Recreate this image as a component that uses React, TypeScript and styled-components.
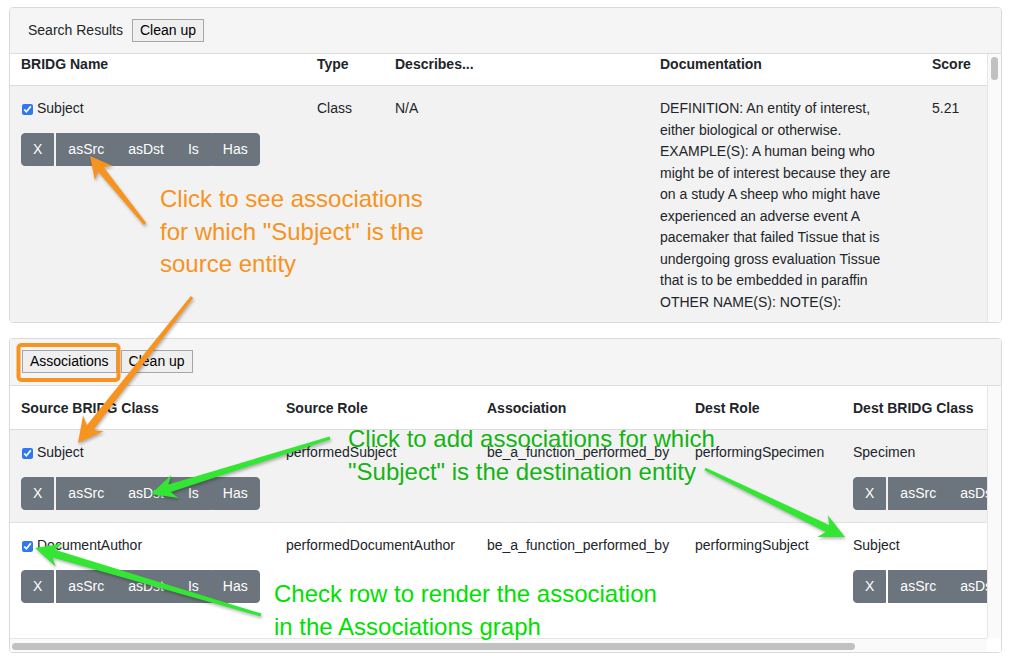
import React from 'react';
import styled, { createGlobalStyle } from 'styled-components';

const FONT = '"Liberation Sans", Arial, Helvetica, sans-serif';

const GlobalStyle = createGlobalStyle`
  html, body { margin: 0; padding: 0; background: #fff; }
  body { font-family: ${FONT}; font-size: 14px; line-height: 21px; color: #212529; }
  * { box-sizing: border-box; }
`;

const Page = styled.div`
  position: relative;
  width: 1009px;
  height: 656px;
  overflow: hidden;
  padding: 7px 7px 0 9px;
  display: flex;
  flex-direction: column;
  gap: 15px;
`;

const Panel = styled.section<{ $height: number }>`
  flex: none;
  height: ${(p) => p.$height}px;
  display: flex;
  flex-direction: column;
  border: 1px solid #dadada;
  border-radius: 4px;
  background: #fff;
  overflow: hidden;
`;

const PanelHeader = styled.div<{ $padBottom: number }>`
  flex: none;
  display: flex;
  align-items: center;
  gap: 4px;
  padding: 11px 12px ${(p) => p.$padBottom}px;
  background: #f5f5f5;
  border-bottom: 1px solid #dcdcdc;
`;

const HeaderTitle = styled.span`
  margin: 0 5px 0 6px;
  font-size: 14px;
  line-height: 21px;
  color: #212529;
`;

const PlainButton = styled.button`
  height: 23px;
  padding: 0 7px;
  font: 14px/21px ${FONT};
  color: #000;
  background: #efefef;
  border: 1px solid #a6a6a6;
  border-radius: 0;
  cursor: pointer;
`;

/* scroll area: viewport plus drawn scrollbars */
const ScrollFrame = styled.div<{ $horizontal?: boolean }>`
  flex: 1;
  min-height: 0;
  display: grid;
  grid-template-columns: minmax(0, 1fr) 14px;
  grid-template-rows: ${(p) => (p.$horizontal ? 'minmax(0, 1fr) 14px' : 'minmax(0, 1fr)')};
  background: #fff;
`;

const Viewport = styled.div`
  overflow: hidden;
  min-width: 0;
  min-height: 0;
`;

const VTrack = styled.div`
  background: #fafafa;
  border-left: 1px solid #e6e6e6;
  padding: 3px 3px 0 3px;
`;

const VThumb = styled.div`
  height: 23px;
  border-radius: 4px;
  background: #c1c1c1;
`;

const HTrack = styled.div`
  background: #fafafa;
  border-top: 1px solid #e6e6e6;
  padding: 4px 0 0 2px;
`;

const HThumb = styled.div<{ $w: number }>`
  width: ${(p) => p.$w}px;
  height: 7px;
  border-radius: 4px;
  background: #c1c1c1;
`;

const Corner = styled.div`
  background: #fff;
`;

const Table = styled.table<{ $width: number }>`
  width: ${(p) => p.$width}px;
  table-layout: fixed;
  border-collapse: collapse;
`;

const Col = styled.col<{ $w: number }>`
  width: ${(p) => p.$w}px;
`;

const Th = styled.th<{ $top: number }>`
  text-align: left;
  font-weight: 700;
  padding: ${(p) => p.$top}px 11px 10px;
  border-bottom: 1px solid #dcdcdc;
  vertical-align: top;
  background: #fff;
  white-space: nowrap;
  color: #212529;
`;

const Tr = styled.tr<{ $striped: boolean }>`
  background: ${(p) => (p.$striped ? '#f2f2f2' : '#fff')};
`;

const Td = styled.td`
  padding: 12px 11px;
  vertical-align: top;
  border-top: 1px solid #e2e2e2;
  white-space: nowrap;
  overflow: visible;
`;

const DocTd = styled(Td)`
  white-space: normal;
  line-height: 21.5px;
`;

const CheckLabel = styled.label`
  display: flex;
  align-items: center;
  gap: 4px;
  line-height: 21px;
`;

const Check = styled.input`
  width: 11px;
  height: 11px;
  margin: 1px 0 0 1px;
  accent-color: #2f78f0;
`;

const ActionGroup = styled.div`
  display: flex;
  margin-top: 14px;
  white-space: nowrap;
`;

const ActionButton = styled.button<{ $pos: 'first' | 'mid' | 'last' }>`
  flex: none;
  height: 33px;
  padding: 5px 11px;
  font: 14px/21px ${FONT};
  color: #fff;
  background: #6c757d;
  border: 1px solid #6c757d;
  border-radius: ${(p) => (p.$pos === 'first' ? '4px 0 0 4px' : p.$pos === 'last' ? '0 4px 4px 0' : '0')};
  margin-right: ${(p) => (p.$pos === 'first' ? '2px' : '0')};
  cursor: pointer;
`;

const Overlay = styled.svg`
  position: absolute;
  left: 0;
  top: 0;
  width: 1009px;
  height: 656px;
  pointer-events: none;
`;

const ArrowShape = styled.polygon<{ $color: string }>`
  fill: ${(p) => p.$color};
  filter: drop-shadow(1px 2px 1.5px rgba(0, 0, 0, 0.28));
`;

const HighlightBox = styled.rect`
  fill: none;
  stroke: #f7931e;
  stroke-width: 4px;
`;

const Note = styled.div<{ $color: string; $x: number; $y: number }>`
  position: absolute;
  left: ${(p) => p.$x}px;
  top: ${(p) => p.$y}px;
  color: ${(p) => p.$color};
  font: 24px/32.5px ${FONT};
  white-space: nowrap;
  pointer-events: none;
`;

const ACTIONS = ['X', 'asSrc', 'asDst', 'Is', 'Has'];

function Actions() {
  return (
    <ActionGroup>
      {ACTIONS.map((a, i) => (
        <ActionButton key={a} $pos={i === 0 ? 'first' : i === ACTIONS.length - 1 ? 'last' : 'mid'}>
          {a}
        </ActionButton>
      ))}
    </ActionGroup>
  );
}

function EntityCell({ name, checked }: { name: string; checked?: boolean }) {
  return (
    <>
      <CheckLabel>
        <Check type="checkbox" defaultChecked={checked} />
        {name}
      </CheckLabel>
      <Actions />
    </>
  );
}

type Result = { name: string; type: string; describes: string; doc: string[]; score: string };

const results: Result[] = [
  {
    name: 'Subject',
    type: 'Class',
    describes: 'N/A',
    score: '5.21',
    doc: [
      'DEFINITION: An entity of interest,',
      'either biological or otherwise.',
      'EXAMPLE(S): A human being who',
      'might be of interest because they are',
      'on a study A sheep who might have',
      'experienced an adverse event A',
      'pacemaker that failed Tissue that is',
      'undergoing gross evaluation Tissue',
      'that is to be embedded in paraffin',
      'OTHER NAME(S): NOTE(S):',
    ],
  },
  { name: 'StudySubject', type: 'Class', describes: 'N/A', score: '4.96', doc: ['DEFINITION: An entity of interest, either biological or otherwise, that is the subject of investigation on a study. EXAMPLE(S): A person enrolled on a clinical trial. OTHER NAME(S): Study Participant NOTE(S):'] },
  { name: 'PerformedSubjectMilestone', type: 'Class', describes: 'N/A', score: '4.41', doc: ['DEFINITION: An activity that marks a point in time at which a subject reaches a significant stage of participation on a study. EXAMPLE(S): Informed consent signed, randomization. OTHER NAME(S): NOTE(S):'] },
  { name: 'StudySubject.statusCode', type: 'Attribute', describes: 'StudySubject', score: '4.12', doc: ['DEFINITION: A coded value specifying the phase in the lifecycle of the study subject. EXAMPLE(S): candidate, eligible, enrolled, on-study, off-study. OTHER NAME(S): Subject Status NOTE(S):'] },
  { name: 'SubjectIdentifier', type: 'Class', describes: 'N/A', score: '3.98', doc: ['DEFINITION: A unique symbol that establishes identity of the subject, within a given context. EXAMPLE(S): Screening number, randomization number. OTHER NAME(S): NOTE(S):'] },
];

type Association = { src: string; srcRole: string; assoc: string; dstRole: string; dst: string };

const associations: Association[] = [
  { src: 'Subject', srcRole: 'performedSubject', assoc: 'be_a_function_performed_by', dstRole: 'performingSpecimen', dst: 'Specimen' },
  { src: 'DocumentAuthor', srcRole: 'performedDocumentAuthor', assoc: 'be_a_function_performed_by', dstRole: 'performingSubject', dst: 'Subject' },
];

type ArrowSpec = {
  from: [number, number];
  to: [number, number];
  color: string;
  head?: number;
  wing?: number;
  tail?: number;
  neck?: number;
};

function arrowPoints({ from, to, head = 24, wing = 12, tail = 3, neck = 8 }: ArrowSpec): string {
  const [x1, y1] = from;
  const [x2, y2] = to;
  const dx = x2 - x1;
  const dy = y2 - y1;
  const len = Math.hypot(dx, dy);
  const ux = dx / len;
  const uy = dy / len;
  const px = -uy;
  const py = ux;
  const bx = x2 - ux * head;
  const by = y2 - uy * head;
  const nx = bx + ux * head * 0.22;
  const ny = by + uy * head * 0.22;
  const pts = [
    [x1 + (px * tail) / 2, y1 + (py * tail) / 2],
    [nx + (px * neck) / 2, ny + (py * neck) / 2],
    [bx + px * wing, by + py * wing],
    [x2, y2],
    [bx - px * wing, by - py * wing],
    [nx - (px * neck) / 2, ny - (py * neck) / 2],
    [x1 - (px * tail) / 2, y1 - (py * tail) / 2],
  ];
  return pts.map((p) => p.map((v) => v.toFixed(1)).join(',')).join(' ');
}

const ORANGE = '#f7931e';
const GREEN_ARROW = '#33e633';

const arrows: ArrowSpec[] = [
  { from: [145, 224], to: [90, 156], color: ORANGE, head: 22, wing: 11.5, tail: 3, neck: 7 },
  { from: [192, 297], to: [78, 443], color: ORANGE, head: 25, wing: 13, tail: 3, neck: 8 },
  { from: [330, 438], to: [151, 494], color: GREEN_ARROW, head: 25, wing: 12, tail: 3, neck: 8 },
  { from: [705, 469], to: [845, 537], color: GREEN_ARROW, head: 25, wing: 12, tail: 3, neck: 8 },
  { from: [261, 615], to: [35, 548], color: GREEN_ARROW, head: 25, wing: 12, tail: 3, neck: 8 },
];

export default function App() {
  return (
    <>
      <GlobalStyle />
      <Page>
        <Panel $height={316}>
          <PanelHeader $padBottom={11}>
            <HeaderTitle>Search Results</HeaderTitle>
            <PlainButton>Clean up</PlainButton>
          </PanelHeader>
          <ScrollFrame>
            <Viewport>
              <Table $width={977}>
                <colgroup>
                  <Col $w={296} />
                  <Col $w={78} />
                  <Col $w={265} />
                  <Col $w={272} />
                  <Col $w={66} />
                </colgroup>
                <thead>
                  <tr>
                    <Th $top={0}>BRIDG Name</Th>
                    <Th $top={0}>Type</Th>
                    <Th $top={0}>Describes...</Th>
                    <Th $top={0}>Documentation</Th>
                    <Th $top={0}>Score</Th>
                  </tr>
                </thead>
                <tbody>
                  {results.map((r, i) => (
                    <Tr key={r.name} $striped={i % 2 === 0}>
                      <Td>
                        <EntityCell name={r.name} checked={i === 0} />
                      </Td>
                      <Td>{r.type}</Td>
                      <Td>{r.describes}</Td>
                      <DocTd>
                        {r.doc.map((line, j) => (
                          <React.Fragment key={j}>
                            {j > 0 && <br />}
                            {line}
                          </React.Fragment>
                        ))}
                      </DocTd>
                      <Td>{r.score}</Td>
                    </Tr>
                  ))}
                </tbody>
              </Table>
            </Viewport>
            <VTrack>
              <VThumb />
            </VTrack>
          </ScrollFrame>
        </Panel>

        <Panel $height={315}>
          <PanelHeader $padBottom={12}>
            <PlainButton>Associations</PlainButton>
            <PlainButton>Clean up</PlainButton>
          </PanelHeader>
          <ScrollFrame $horizontal>
            <Viewport>
              <Table $width={1127}>
                <colgroup>
                  <Col $w={265} />
                  <Col $w={201} />
                  <Col $w={208} />
                  <Col $w={158} />
                  <Col $w={295} />
                </colgroup>
                <thead>
                  <tr>
                    <Th $top={12}>Source BRIDG Class</Th>
                    <Th $top={12}>Source Role</Th>
                    <Th $top={12}>Association</Th>
                    <Th $top={12}>Dest Role</Th>
                    <Th $top={12}>Dest BRIDG Class</Th>
                  </tr>
                </thead>
                <tbody>
                  {associations.map((a, i) => (
                    <Tr key={a.src + a.dst} $striped={i % 2 === 0}>
                      <Td>
                        <EntityCell name={a.src} checked />
                      </Td>
                      <Td>{a.srcRole}</Td>
                      <Td>{a.assoc}</Td>
                      <Td>{a.dstRole}</Td>
                      <Td>
                        <div>{a.dst}</div>
                        <Actions />
                      </Td>
                    </Tr>
                  ))}
                </tbody>
              </Table>
            </Viewport>
            <VTrack />
            <HTrack>
              <HThumb $w={843} />
            </HTrack>
            <Corner />
          </ScrollFrame>
        </Panel>

        <Overlay viewBox="0 0 1009 656">
          <HighlightBox x={18.5} y={345} width={100} height={35} rx={3} />
          {arrows.map((a, i) => (
            <ArrowShape key={i} $color={a.color} points={arrowPoints(a)} />
          ))}
        </Overlay>

        <Note $color={ORANGE} $x={160} $y={183}>
          Click to see associations
          <br />
          for which "Subject" is the
          <br />
          source entity
        </Note>
        <Note $color="#14b414" $x={348} $y={423}>
          Click to add associations for which
          <br />
          "Subject" is the destination entity
        </Note>
        <Note $color="#00e000" $x={274} $y={578}>
          Check row to render the association
          <br />
          in the Associations graph
        </Note>
      </Page>
    </>
  );
}
